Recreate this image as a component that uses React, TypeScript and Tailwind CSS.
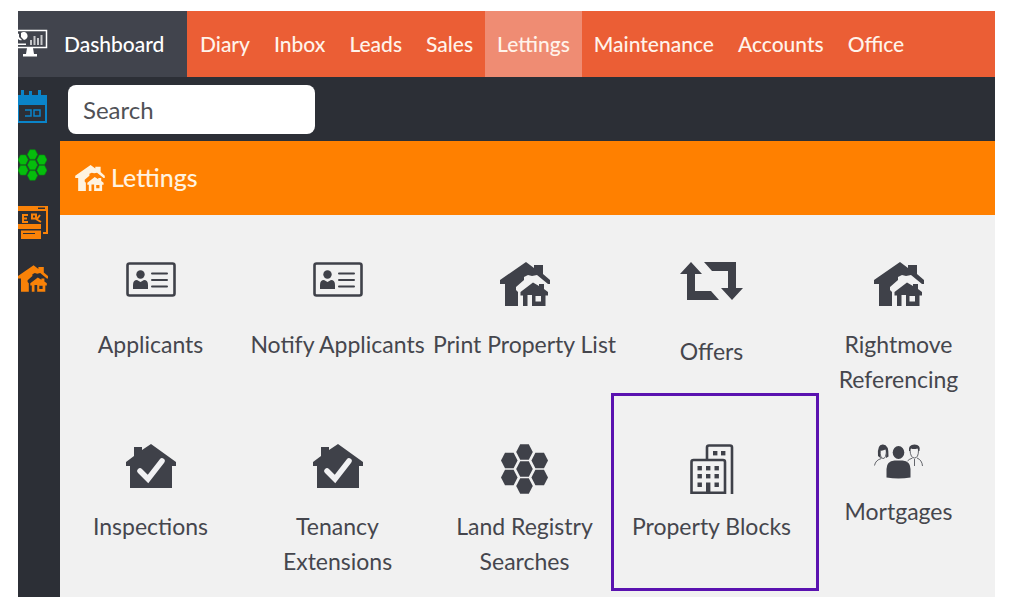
import type { ReactNode } from "react";

function HousesIcon({ className }: { className: string }) {
  return (
    <svg viewBox="0 0 50 44" className={className} fill="currentColor" aria-hidden="true">
      <path d="M26 0 34 6V3h9v9l7 6v4h-2L37 13l-5 1-4-1-4 2v3l-8 7v3l2 2V44H5V22H0v-4Z" />
      <path
        fillRule="evenodd"
        d="M33 20.500l6 3.500V22h5v5l4 3v3.500h-2.500V44H32V33h-4.500v11H23V33.500h-2.500V30Zm2.500 13.500v5.500h5.500v-5.500Z"
      />
    </svg>
  );
}

function HouseCheckIcon() {
  return (
    <svg viewBox="0 0 50 44" className="h-[44px] w-[50px]" aria-hidden="true">
      <path fill="currentColor" d="M25 0 50 18v4h-4v22H4V22H0v-4l8-6V3h8v3Z" />
      <path d="m14 27 8 8L36 17" fill="none" stroke="#f1f1f3" strokeWidth="5.5" strokeLinecap="round" />
    </svg>
  );
}

function CardIcon() {
  return (
    <svg viewBox="0 0 50 35" className="h-[35px] w-[50px]" fill="currentColor" aria-hidden="true">
      <rect x="1.5" y="1.5" width="47" height="32" rx="2" fill="none" stroke="currentColor" strokeWidth="2.6" />
      <circle cx="14.5" cy="12.5" r="4.2" />
      <path d="M7 27v-4q0-5 4-5l3.500 2 3.500-2q4 0 4 5v4Z" />
      <path d="M26 11.500h15M26 18h15M26 24.500h15" stroke="currentColor" strokeWidth="2" strokeLinecap="round" />
    </svg>
  );
}

function SwapIcon() {
  return (
    <svg viewBox="0 0 63 38" className="h-[38px] w-[63px]" fill="currentColor" aria-hidden="true">
      <path d="M11 0 22 12h-7v17h16l8 9H7V12H0Z" />
      <path d="M24 0h32v26h7L52 38 41 26h7V9H32Z" />
    </svg>
  );
}

const hexCentres = [
  [23.5, 8],
  [23.5, 25],
  [23.5, 42],
  [8.3, 16.5],
  [8.3, 33.5],
  [38.7, 16.5],
  [38.7, 33.5],
];

function HexagonsIcon({ className, stroke }: { className: string; stroke?: string }) {
  return (
    <svg viewBox="0 0 47 50" className={className} fill="currentColor" stroke={stroke} aria-hidden="true">
      {hexCentres.map(([x, y]) => (
        <path key={`${x}-${y}`} d={`M${x - 8.3} ${y}l4 -7.800h8.600l4 7.800l-4 7.800h-8.600z`} />
      ))}
    </svg>
  );
}

function BuildingsIcon() {
  return (
    <svg viewBox="0 0 44 50" className="h-[50px] w-[44px]" fill="currentColor" aria-hidden="true">
      <g fill="none" stroke="currentColor" strokeWidth="2.6">
        <path d="M1.500 48.700V18q0-2 2-2h29.500q2 0 2 2v30.700Z" />
        <path d="M17 15V3.500q0-2 2-2h21q2 0 2 2V50" />
      </g>
      {[23, 31].map((x) => (
        <rect key={x} x={x} y="7" width="4.400" height="4.400" />
      ))}
      {[22, 30].map((y) =>
        [7.5, 16, 24.5].map((x) => <rect key={`${x}-${y}`} x={x} y={y} width="4.400" height="4.400" />),
      )}
      <path d="M7.500 38.500h4.400v4.400H7.500ZM24.500 38.500h4.400v4.400h-4.400ZM16 38.500h4.400V49H16Z" />
    </svg>
  );
}

function PeopleIcon() {
  return (
    <svg viewBox="0 0 49 35" className="h-[35px] w-[49px]" fill="currentColor" aria-hidden="true">
      <ellipse cx="24.500" cy="8.500" rx="5.800" ry="6.500" />
      <path d="M12.500 33.500V25q0-8 8-8.500h8q8 .5 8 8.500v8.500q-12 2-24 0Z" />
      <path d="M4 12Q3 0 9 .5q6 0 5.500 12l-2.500 1.500q1-5-.5-8.500-3 1.500-5 1-1 5 .5 8Z" />
      <path d="M35 7q-1-6.500 5.500-6.500T45.500 7l-1 0-1-2.500q-4 1-6.500 0L36 7Z" />
      <g fill="none" stroke="currentColor" strokeWidth=".8">
        <path d="M6 6q0 8 3 8.500t3.500-8.500M7.500 14.500q-6 1.500-7 7M36 6q.5 8 4.500 8t4-8M38.500 14q-4 1.500-5 3M43 14q5 2 5.500 8M40.500 15v7" />
      </g>
    </svg>
  );
}

function MonitorIcon() {
  return (
    <svg viewBox="0 0 30 30" className="h-[30px] w-[30px]" fill="currentColor" aria-hidden="true">
      <path d="M0 1.500h28.500v17H0" fill="none" stroke="currentColor" strokeWidth="1.500" />
      <path d="M9 19h6l1 6h3v2.500H5V25h3Z" />
      <path d="M1 4.500V8l3 3a4 4 0 0 1-4-1V5ZM3 4a4 4 0 1 1 3 7L3 8ZM0 14.500h8V16H0Z" />
      <path d="M12 11h2v5h-2zM15.500 7h2v9h-2zM19 9h2v7h-2zM22.500 6h2v10h-2z" opacity=".7" />
    </svg>
  );
}

function CalendarIcon() {
  return (
    <svg viewBox="0 0 30 34" className="h-[34px] w-[30px] text-[#0a84c9]" fill="currentColor" aria-hidden="true">
      <path d="M0 5h3V0h3v5h5V1h3v4h6V0h3v5h6v10H0Z" />
      <path d="M0 15v17h28V15" fill="none" stroke="currentColor" strokeWidth="2" />
      <path d="M7 20h6v6H7M16 20h6v6h-6Z" fill="none" stroke="currentColor" strokeWidth="1.500" />
    </svg>
  );
}

function NewspaperIcon() {
  return (
    <svg viewBox="0 0 30 33" className="h-[33px] w-[30px] text-[#f98208]" fill="currentColor" aria-hidden="true">
      <path fillRule="evenodd" d="M0 0h30v28h-5v-2h3V5H0ZM20 1.500v1.500h7V1.500Z" />
      <path d="M10 9H5v7h5M5 12.500h4M14 8.500h4v4h-4ZM18 13l5 3M22 9l-3 4" fill="none" stroke="currentColor" strokeWidth="2" />
      <path d="M0 18h23v5H0ZM3 24.500h20V33H3Z" />
      <path d="M5 27.500h12" stroke="#2c2f36" />
    </svg>
  );
}

const navItems = ["Diary", "Inbox", "Leads", "Sales", "Lettings", "Maintenance", "Accounts", "Office"];

type Tile = { label: string; icon: ReactNode; slot?: string; marked?: boolean };

const tiles: Tile[] = [
  { label: "Applicants", icon: <CardIcon /> },
  { label: "Notify Applicants", icon: <CardIcon /> },
  { label: "Print Property List", icon: <HousesIcon className="h-[44px] w-[50px]" /> },
  { label: "Offers", icon: <SwapIcon />, slot: "h-[57px]" },
  { label: "Rightmove Referencing", icon: <HousesIcon className="h-[44px] w-[50px]" /> },
  { label: "Inspections", icon: <HouseCheckIcon /> },
  { label: "Tenancy Extensions", icon: <HouseCheckIcon /> },
  { label: "Land Registry Searches", icon: <HexagonsIcon className="h-[50px] w-[47px]" /> },
  { label: "Property Blocks", icon: <BuildingsIcon />, marked: true },
  { label: "Mortgages", icon: <PeopleIcon />, slot: "h-[35px]" },
];

const shortcuts = [
  { label: "Calendar", icon: <CalendarIcon /> },
  {
    label: "Land registry",
    icon: <HexagonsIcon className="h-[34px] w-[29px] text-[#05bd0c]" stroke="#078a10" />,
  },
  { label: "News", icon: <NewspaperIcon /> },
  { label: "Properties", icon: <HousesIcon className="h-[31px] w-[30px] text-[#f98208]" /> },
];

export default function App() {
  return (
    <div className="bg-white pt-[11px] pr-4 pb-[7px] pl-[18px] font-['Lato',sans-serif] text-[23px] text-[#45464d]">
      <header className="flex h-[66px] bg-[#eb5e35] text-[21px] font-medium text-[#fff3ea]">
        <a href="#dashboard" className="flex w-[169px] shrink-0 items-center gap-4 bg-[#41444d] text-white">
          <MonitorIcon />
          Dashboard
        </a>
        <nav className="flex pl-px">
          {navItems.map((item) => (
            <a
              key={item}
              href={`#${item.toLowerCase()}`}
              className={`flex items-center px-3 ${item === "Lettings" ? "bg-[#ef8c73]" : ""}`}
            >
              {item}
            </a>
          ))}
        </nav>
      </header>
      <div className="flex bg-[#2c2f36]">
        <aside className="flex w-[42px] shrink-0 flex-col gap-[24px] pt-[13px]">
          {shortcuts.map((s) => (
            <a key={s.label} href="#shortcut" aria-label={s.label}>
              {s.icon}
            </a>
          ))}
        </aside>
        <main className="min-w-0 flex-1">
          <div className="flex h-16 items-center px-2">
            <input
              type="text"
              aria-label="Search"
              placeholder="Search"
              className="h-[49px] w-[247px] rounded-lg bg-white px-[15px] text-2xl placeholder:text-[#505156]"
            />
          </div>
          <h1 className="flex h-[74px] items-center gap-[6px] bg-[#ff8000] pl-[15px] text-[25px] font-medium text-[#fff3e0]">
            <HousesIcon className="h-[26px] w-[30px]" />
            Lettings
          </h1>
          <div className="bg-[#f1f1f1] pb-[18px]">
            <div className="mr-[3px] -ml-[3px] grid grid-cols-5">
              {tiles.map((tile) => (
                <a
                  key={tile.label}
                  href="#tile"
                  className="relative flex flex-col items-center pt-[47px] text-center leading-[35px]"
                >
                  <span className={`mb-[15px] flex items-start text-[#3f4149] ${tile.slot ?? "h-[50px]"}`}>
                    {tile.icon}
                  </span>
                  <span>{tile.label}</span>
                  {tile.marked && (
                    <span className="absolute -top-1 -right-[14px] -bottom-3 -left-[7px] border-[3px] border-[#5a12b0]" />
                  )}
                </a>
              ))}
            </div>
          </div>
        </main>
      </div>
    </div>
  );
}
